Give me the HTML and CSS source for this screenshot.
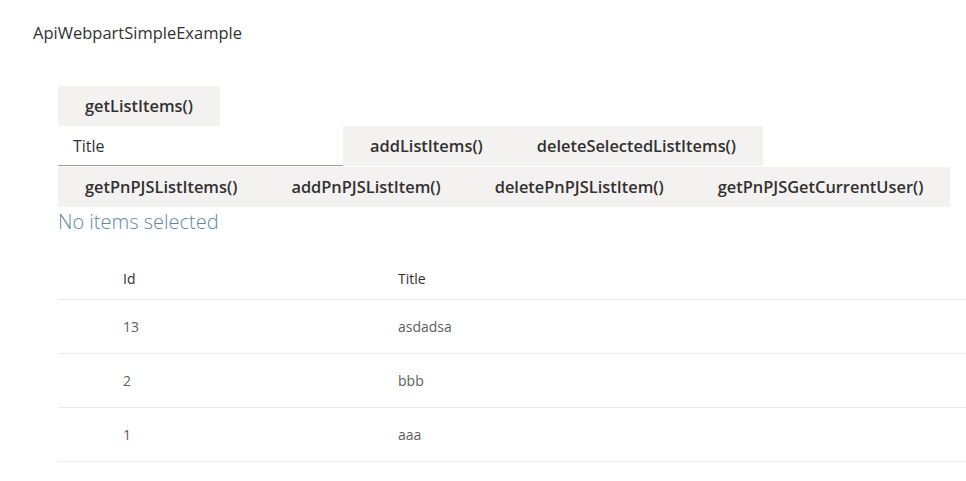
FILE: index.html
```html
<!DOCTYPE html>
<html>
<head>
<meta charset="utf-8">
<link rel="stylesheet" href="styles.css">
</head>
<body>
<div class="title">ApiWebpartSimpleExample</div>
<div class="app">
  <div class="row">
    <button class="btn">getListItems()</button>
  </div>
  <div class="row">
    <div class="field">Title</div>
    <button class="btn">addListItems()</button>
    <button class="btn">deleteSelectedListItems()</button>
  </div>
  <div class="row row-sep">
    <button class="btn">getPnPJSListItems()</button>
    <button class="btn">addPnPJSListItem()</button>
    <button class="btn">deletePnPJSListItem()</button>
    <button class="btn">getPnPJSGetCurrentUser()</button>
  </div>
  <div class="status">No items selected</div>
  <div class="list">
    <div class="list-row list-head">
      <div class="cell cell-id">Id</div>
      <div class="cell">Title</div>
    </div>
    <div class="list-row">
      <div class="cell cell-id">13</div>
      <div class="cell">asdadsa</div>
    </div>
    <div class="list-row">
      <div class="cell cell-id">2</div>
      <div class="cell">bbb</div>
    </div>
    <div class="list-row">
      <div class="cell cell-id">1</div>
      <div class="cell">aaa</div>
    </div>
  </div>
</div>
</body>
</html>
```
FILE: styles.css
```css
html, body {
  margin: 0;
  padding: 0;
  background: #ffffff;
  font-family: "Open Sans", "Noto Sans", "Liberation Sans", sans-serif;
  color: #323130;
}
.title {
  font-size: 16.5px;
  line-height: 22px;
  padding: 22px 0 0 33px;
  color: #323130;
}
.app {
  margin: 42px 0 0 58px;
}
.row {
  display: flex;
  align-items: stretch;
  height: 40px;
}
.row-sep {
  margin-top: 1px;
}
.btn {
  border: none;
  margin: 0;
  background: #f3f2f1;
  color: #323130;
  font-family: inherit;
  font-size: 16.4px;
  font-weight: 600;
  padding: 0 27px 1px 27px;
  height: 40px;
  cursor: pointer;
}
.field {
  width: 285px;
  box-sizing: border-box;
  padding: 0 0 0 15px;
  border-bottom: 1px solid #a19f9d;
  font-size: 16px;
  line-height: 41px;
  color: #323130;
}
.status {
  font-size: 20px;
  font-weight: 300;
  line-height: 30px;
  color: #5f88a3;
  margin-top: 0;
}
.list {
  margin-top: 21px;
}
.list-row {
  display: grid;
  grid-template-columns: 340px 1fr;
  height: 53px;
  align-items: center;
  border-bottom: 1px solid #edebe9;
  font-size: 14px;
  color: #605e5c;
}
.list-head {
  height: 41px;
  color: #323130;
  font-size: 14px;
}
.cell-id {
  padding-left: 65px;
}
```
